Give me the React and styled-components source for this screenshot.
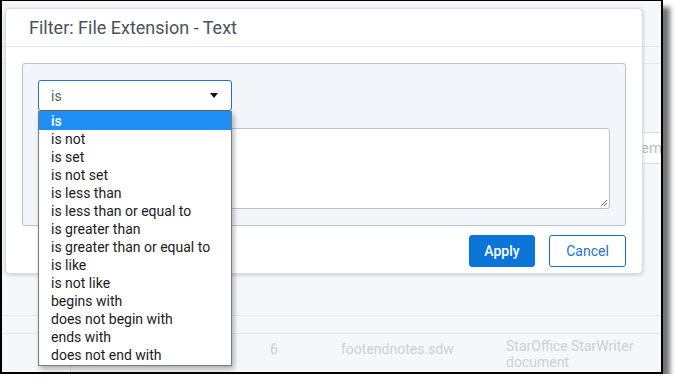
import React from "react";
import styled, { createGlobalStyle } from "styled-components";

const GlobalStyle = createGlobalStyle`
  html, body {
    margin: 0;
    padding: 0;
    background: #fff;
    font-family: Roboto, "Liberation Sans", sans-serif;
  }
`;

const Frame = styled.div`
  position: relative;
  width: 659px;
  height: 371px;
  border: 2px solid #000;
  border-top-width: 1px;
  background: #f5f8fb;
  box-shadow: 7px 7px 5px rgba(0, 0, 0, 0.55);
  overflow: hidden;
`;

const BgPage = styled.div`
  display: flex;
  flex-direction: column;
  height: 100%;
  color: #c6ccd2;
  font-size: 14px;
`;

const BgBar = styled.div`
  height: ${p => p.h}px;
  flex: none;
  border-bottom: 1px solid #e4e9ee;
  background: ${p => p.bg || "#f5f8fb"};
  display: flex;
  justify-content: flex-end;
  align-items: flex-start;
`;

const BgInput = styled.div`
  margin-top: ${p => p.top}px;
  width: 20px;
  height: 30px;
  border: 1px solid #dde3e9;
  border-right: none;
  background: #fff;
  display: flex;
  align-items: center;
  padding-left: 8px;
  font-size: 15px;
  color: #b8bec5;
  white-space: nowrap;
  overflow: hidden;
`;

const BgRow = styled.div`
  display: grid;
  grid-template-columns: 68px 200px 71px 165px 1fr;
  height: ${p => p.h}px;
  flex: none;
  border-bottom: ${p => (p.last ? "none" : "1px solid #e4e9ee")};
  background: ${p => p.bg || "#f5f8fb"};
`;

const BgCell = styled.div`
  border-left: ${p => (p.line ? "1px solid #e0e5ea" : "none")};
  padding-top: ${p => p.pt || 0}px;
  line-height: 16px;
  color: #cbd0d6;
`;

const Modal = styled.div`
  position: absolute;
  left: 3px;
  top: 7px;
  width: 636px;
  height: 264px;
  background: #fff;
  border: 1px solid #d6dce2;
  border-radius: 5px;
  box-shadow: 0 1px 4px rgba(0, 0, 0, 0.18);
  display: flex;
  flex-direction: column;
`;

const ModalHeader = styled.div`
  height: 37px;
  flex: none;
  border-bottom: 1px solid #e1e6eb;
  display: flex;
  align-items: center;
  padding-left: 23px;
  font-size: 18px;
  color: #4b525c;
`;

const ModalBody = styled.div`
  padding: 16px 16px 7px 16px;
  display: flex;
  flex-direction: column;
`;

const Panel = styled.div`
  position: relative;
  height: 129px;
  background: #f2f6fa;
  border: 1px solid #b3c4d5;
  border-radius: 3px;
  padding: 16px 15px;
  display: flex;
  flex-direction: column;
  gap: 17px;
`;

const Select = styled.div`
  box-sizing: border-box;
  width: 194px;
  height: 31px;
  background: #fff;
  border: 1px solid #1b73c7;
  border-radius: 3px;
  display: flex;
  align-items: center;
  justify-content: space-between;
  padding: 0 13px 0 12px;
  font-size: 14px;
  color: #5b5f64;
`;

const Caret = styled.span`
  width: 0;
  height: 0;
  border-left: 4.5px solid transparent;
  border-right: 4.5px solid transparent;
  border-top: 5px solid #111;
`;

const TextArea = styled.div`
  position: relative;
  height: 79px;
  background: #fff;
  border: 1px solid #b3c4d5;
  border-radius: 3px;
`;

const Grip = styled.svg`
  position: absolute;
  right: 1px;
  bottom: 1px;
`;

const Menu = styled.ul`
  position: absolute;
  left: 15px;
  top: 47px;
  width: 192px;
  margin: 0;
  padding: 0 0 1px;
  list-style: none;
  background: #fff;
  border: 1px solid #7a7a7a;
  box-shadow: 2px 3px 5px rgba(0, 0, 0, 0.3);
  z-index: 2;
`;

const MenuItem = styled.li`
  height: 18px;
  line-height: 18px;
  padding-left: 12px;
  font-size: 14px;
  color: ${p => (p.active ? "#fff" : "#1d1a24")};
  background: ${p => (p.active ? "#1e8ff7" : "transparent")};
  font-weight: ${p => (p.active ? 500 : 400)};
`;

const Actions = styled.div`
  display: flex;
  justify-content: flex-end;
  gap: 14px;
  margin-top: 9px;
`;

const Button = styled.button`
  height: 32px;
  padding: 0;
  width: ${p => p.w}px;
  border-radius: 3px;
  font-family: Roboto, "Liberation Sans", sans-serif;
  font-size: 14px;
  border: 1px solid #0b74d9;
  background: ${p => (p.primary ? "#0b74d9" : "#fff")};
  color: ${p => (p.primary ? "#fff" : "#1a73cf")};
  font-weight: ${p => (p.primary ? 500 : 400)};
`;

const options = [
  "is",
  "is not",
  "is set",
  "is not set",
  "is less than",
  "is less than or equal to",
  "is greater than",
  "is greater than or equal to",
  "is like",
  "is not like",
  "begins with",
  "does not begin with",
  "ends with",
  "does not end with",
];

export default function App() {
  return (
    <>
      <GlobalStyle />
      <Frame>
        <BgPage>
          <BgBar h={45} />
          <BgBar h={16} />
          <BgBar h={251}>
            <BgInput top={68}>em</BgInput>
          </BgBar>
          <BgRow h={17}>
            <BgCell />
            <BgCell line />
          </BgRow>
          <BgRow h={38} last>
            <BgCell />
            <BgCell line />
            <BgCell pt={7}>6</BgCell>
            <BgCell pt={7}>footendnotes.sdw</BgCell>
            <BgCell pt={4}>
              StarOffice StarWriter
              <br />
              document
            </BgCell>
          </BgRow>
        </BgPage>

        <Modal>
          <ModalHeader>Filter: File Extension - Text</ModalHeader>
          <ModalBody>
            <Panel>
              <Select>
                <span>is</span>
                <Caret />
              </Select>
              <TextArea>
                <Grip width="9" height="9" viewBox="0 0 9 9">
                  <path d="M8 2 L2 8 M8 5 L5 8" stroke="#666" strokeWidth="1" />
                </Grip>
              </TextArea>
              <Menu>
                {options.map((o, i) => (
                  <MenuItem key={o} active={i === 0}>
                    {o}
                  </MenuItem>
                ))}
              </Menu>
            </Panel>
            <Actions>
              <Button primary w={66}>Apply</Button>
              <Button w={77}>Cancel</Button>
            </Actions>
          </ModalBody>
        </Modal>
      </Frame>
    </>
  );
}
